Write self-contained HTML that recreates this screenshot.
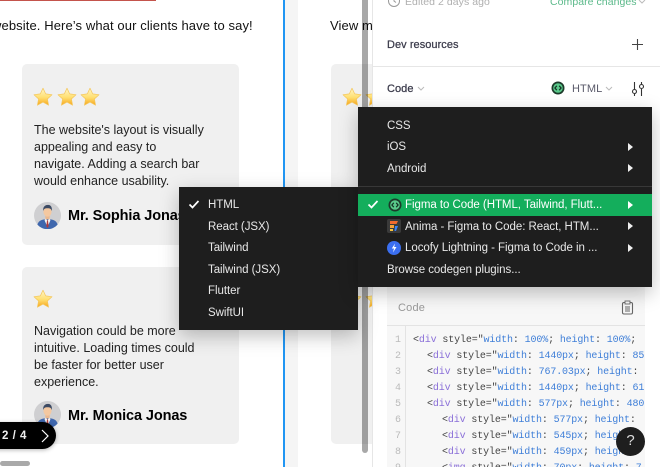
<!DOCTYPE html>
<html><head><meta charset="utf-8"><style>
html,body{margin:0;padding:0}
body{width:660px;height:467px;overflow:hidden;position:relative;background:#fff;font-family:"Liberation Sans",sans-serif}
.a{position:absolute}
.t{position:absolute;white-space:nowrap;line-height:16px}
.p{color:#222;font-size:12.5px;letter-spacing:0}
.n{color:#000;font-size:14.5px;font-weight:700;letter-spacing:-.1px}
.m{color:#e8e8e8;font-size:11.5px;letter-spacing:-.05px}
.arr{position:absolute;left:628px;width:0;height:0;border-left:5px solid #eee;border-top:4px solid transparent;border-bottom:4px solid transparent}
.c{position:absolute;white-space:nowrap;font:10px/16px "Liberation Mono",monospace;letter-spacing:-.13px;color:#444}
.c b{font-weight:400;color:#8a6fd8}.c i{font-style:normal;color:#3f7fd8}
.ln{position:absolute;left:395px;width:12px;font:10px/16px "Liberation Mono",monospace;color:#bbb}
.h{font-size:11px;color:#3a3a4a;-webkit-text-stroke:.25px #3a3a4a;letter-spacing:.05px}
</style></head><body>
<svg width="0" height="0" style="position:absolute"><defs>
<linearGradient id="g" x1="0" y1="0" x2="0" y2="1"><stop offset="0" stop-color="#fff6c8"/><stop offset=".55" stop-color="#ffdf70"/><stop offset="1" stop-color="#f8a51c"/></linearGradient>
<symbol id="s" viewBox="0 0 20 20"><path d="M10 1.2l2.7 5.7 6.3.8-4.6 4.3 1.2 6.2L10 15.1l-5.6 3.1 1.2-6.2L1 7.7l6.3-.8z" fill="url(#g)" stroke="#f4c65a" stroke-width=".7" stroke-linejoin="round"/></symbol>
<symbol id="av" viewBox="0 0 28 28"><circle cx="14" cy="14" r="14" fill="#cfcfd1"/><path d="M3.5 23.5c1-4 4.500-5.500 10.500-6 6 .5 9.500 2 10.500 6A14 14 0 0 1 3.500 23.500z" fill="#3f67ad"/><path d="M11.500 17l2.500 2 2.500-2 .5 2-3 7-3-7z" fill="#f3f3f3"/><path d="M13.500 19h1l.7 6-1.200 2-1.200-2z" fill="#b23a3a"/><rect x="11.800" y="13" width="4.400" height="5" fill="#eab88f"/><ellipse cx="14" cy="10" rx="4.200" ry="5.200" fill="#f4c8a0"/><path d="M9.500 9.500C9 4.500 12 3 14.500 3c3 0 4.500 2.500 4 6.500-.5-2-1.500-3-4.500-3s-4 1-4.500 3z" fill="#3c4a63"/></symbol>
<symbol id="fc" viewBox="0 0 14 14"><circle cx="7" cy="7" r="6.500" fill="#1c3a2a"/><circle cx="7" cy="7" r="4.800" fill="#59c98a"/><path d="M5.800 4.800L3.900 7l1.900 2.200M8.200 4.800L10.100 7 8.200 9.200" fill="none" stroke="#143024" stroke-width="1.200"/></symbol>
</defs></svg>

<!-- left canvas -->
<div class="a" style="left:0;top:0;width:156px;height:1px;background:#c4544c"></div>
<div class="t" style="left:-8px;top:18px;font-size:13px;letter-spacing:.1px;color:#111">website. Here’s what our clients have to say!</div>
<div class="a" style="left:283px;top:0;width:2px;height:467px;background:#2196f3"></div>
<div class="a" style="left:285px;top:0;width:13px;height:467px;background:#f5f5f5"></div>

<div class="a" style="left:22px;top:64px;width:217px;height:181px;background:#f0f0f0;border-radius:5px"></div>
<svg class="a" style="left:33px;top:87px" width="21" height="20"><use href="#s" width="20" height="20"/></svg>
<svg class="a" style="left:57px;top:87px" width="21" height="20"><use href="#s" width="20" height="20"/></svg>
<svg class="a" style="left:80px;top:87px" width="21" height="20"><use href="#s" width="20" height="20"/></svg>
<div class="t p" style="left:34px;top:122px">The website's layout is visually</div>
<div class="t p" style="left:34px;top:139px">appealing and easy to</div>
<div class="t p" style="left:34px;top:156px">navigate. Adding a search bar</div>
<div class="t p" style="left:34px;top:173px">would enhance usability.</div>
<svg class="a" style="left:34px;top:201px" width="27" height="30"><use href="#av" width="27" height="27" y="1"/></svg>
<div class="t n" style="left:68px;top:208px">Mr. Sophia Jonas</div>

<div class="a" style="left:22px;top:267px;width:217px;height:177px;background:#f0f0f0;border-radius:5px"></div>
<svg class="a" style="left:33px;top:289px" width="21" height="20"><use href="#s" width="20" height="20"/></svg>
<div class="t p" style="left:34px;top:323px">Navigation could be more</div>
<div class="t p" style="left:34px;top:340px">intuitive. Loading times could</div>
<div class="t p" style="left:34px;top:357px">be faster for better user</div>
<div class="t p" style="left:34px;top:374px">experience.</div>
<svg class="a" style="left:34px;top:401px" width="27" height="30"><use href="#av" width="27" height="27" y="0"/></svg>
<div class="t n" style="left:68px;top:408px">Mr. Monica Jonas</div>

<!-- second column -->
<div class="t" style="left:330px;top:18px;font-size:13px;letter-spacing:.1px;color:#111">View more</div>
<div class="a" style="left:331px;top:64px;width:42px;height:380px;background:#f0f0f0;border-radius:5px 0 0 5px"></div>
<svg class="a" style="left:342px;top:87px" width="21" height="20"><use href="#s" width="20" height="20"/></svg>
<svg class="a" style="left:365px;top:87px" width="21" height="20"><use href="#s" width="20" height="20"/></svg>
<svg class="a" style="left:342px;top:289px" width="21" height="20"><use href="#s" width="20" height="20"/></svg>
<svg class="a" style="left:365px;top:289px" width="21" height="20"><use href="#s" width="20" height="20"/></svg>
<div class="a" style="left:362px;top:0;width:6px;height:453px;background:rgba(0,0,0,.34);border-radius:0 0 3px 3px"></div>
<div class="a" style="left:0;top:461px;width:30px;height:5px;background:#a9a9a9;border-radius:3px"></div>

<!-- pager -->
<div class="a" style="left:-20px;top:422px;width:76px;height:27px;background:#000;border-radius:14px;box-shadow:0 1px 4px rgba(0,0,0,.3)"></div>
<div class="t" style="left:2px;top:428px;color:#eee;font-size:11.500px;font-weight:700;letter-spacing:.5px">2 / 4</div>
<svg class="a" style="left:39px;top:428px" width="12" height="16"><path d="M3 2l6 6-6 6" fill="none" stroke="#fff" stroke-width="1.200"/></svg>

<!-- right panel -->
<div class="a" style="left:372px;top:0;width:288px;height:467px;background:#fff;border-left:1px solid #e6e6e6;box-sizing:border-box"></div>
<svg class="a" style="left:387px;top:-6px" width="14" height="14"><circle cx="7" cy="7" r="5.500" fill="none" stroke="#999"/><path d="M7 4v3l2 1.500" fill="none" stroke="#999"/></svg>
<div class="t" style="left:405px;top:-6px;font-size:10.500px;color:#b0b0b0;letter-spacing:.05px">Edited 2 days ago</div>
<div class="t" style="left:550px;top:-6px;font-size:10.500px;color:#5bb98a;letter-spacing:.05px">Compare changes</div>
<svg class="a" style="left:638px;top:-1px" width="8" height="6"><path d="M1 1l3 3 3-3" fill="none" stroke="#bbb"/></svg>
<div class="t h" style="left:387px;top:37px">Dev resources</div>
<svg class="a" style="left:631px;top:38px" width="13" height="13"><path d="M6.500 1v11M1 6.500h11" stroke="#444" stroke-width="1.100"/></svg>
<div class="a" style="left:373px;top:66px;width:287px;height:1px;background:#e6e6e6"></div>
<div class="t h" style="left:387px;top:81px">Code</div>
<svg class="a" style="left:417px;top:86px" width="8" height="6"><path d="M1 1l3 3 3-3" fill="none" stroke="#bbb"/></svg>
<svg class="a" style="left:551px;top:81px" width="14" height="14"><use href="#fc" width="14" height="14"/></svg>
<div class="t" style="left:572px;top:81px;font-size:11px;color:#5a5a6a;letter-spacing:.1px">HTML</div>
<svg class="a" style="left:605px;top:86px" width="8" height="6"><path d="M1 1l3 3 3-3" fill="none" stroke="#bbb"/></svg>
<svg class="a" style="left:631px;top:81px" width="14" height="16"><path d="M3.500 1v7M3.500 13v2M10.500 1v2M10.500 8v7" stroke="#333" stroke-width="1.100" fill="none"/><circle cx="3.500" cy="10.500" r="2" fill="none" stroke="#333" stroke-width="1.100"/><circle cx="10.500" cy="5.500" r="2" fill="none" stroke="#333" stroke-width="1.100"/></svg>

<!-- code panel -->
<div class="a" style="left:387px;top:287px;width:258px;height:180px;background:#f7f7f7"></div>
<div class="a" style="left:387px;top:325px;width:258px;height:1px;background:#e3e3e3"></div>
<div class="a" style="left:405px;top:325px;width:1px;height:142px;background:#e3e3e3"></div>
<div class="t" style="left:398px;top:300px;font-size:11px;color:#999;letter-spacing:.2px">Code</div>
<svg class="a" style="left:620px;top:300px" width="15" height="15"><rect x="2.500" y="2.500" width="10" height="11.500" rx="1.500" fill="none" stroke="#666" stroke-width="1.100"/><rect x="5" y="1" width="5" height="3" fill="#f7f7f7" stroke="#666" stroke-width=".9"/><path d="M5 7h5M5 9h5M5 11h5" stroke="#666" stroke-width=".9"/></svg>
<div style="position:absolute;left:0;top:0;width:645px;height:467px;overflow:hidden">
<div class="ln" style="top:333px">1</div><div class="ln" style="top:349px">2</div><div class="ln" style="top:365px">3</div><div class="ln" style="top:381px">4</div><div class="ln" style="top:397px">5</div><div class="ln" style="top:413px">6</div><div class="ln" style="top:429px">7</div><div class="ln" style="top:445px">8</div><div class="ln" style="top:461px">9</div>
<div class="c" style="left:413px;top:333px">&lt;<b>div</b> style="<i>width</i>: <i>100%</i>; <i>height</i>: <i>100%</i>;</div>
<div class="c" style="left:427px;top:349px">&lt;<b>div</b> style="<i>width</i>: <i>1440px</i>; <i>height</i>: <i>85</i></div>
<div class="c" style="left:427px;top:365px">&lt;<b>div</b> style="<i>width</i>: <i>767.03px</i>; <i>height</i>:</div>
<div class="c" style="left:427px;top:381px">&lt;<b>div</b> style="<i>width</i>: <i>1440px</i>; <i>height</i>: <i>61</i></div>
<div class="c" style="left:427px;top:397px">&lt;<b>div</b> style="<i>width</i>: <i>577px</i>; <i>height</i>: <i>480</i></div>
<div class="c" style="left:442px;top:413px">&lt;<b>div</b> style="<i>width</i>: <i>577px</i>; <i>height</i>:</div>
<div class="c" style="left:442px;top:429px">&lt;<b>div</b> style="<i>width</i>: <i>545px</i>; <i>height</i>:</div>
<div class="c" style="left:442px;top:445px">&lt;<b>div</b> style="<i>width</i>: <i>459px</i>; <i>height</i>:</div>
<div class="c" style="left:442px;top:461px">&lt;<b>img</b> style="<i>width</i>: <i>70px</i>; <i>height</i>: <i>7</i></div>
</div>
<div class="a" style="left:616px;top:427px;width:29px;height:29px;border-radius:50%;background:#1e1e1e"></div>
<div class="t" style="left:616px;width:29px;text-align:center;top:433px;color:#ddd;font-size:15px">?</div>

<!-- submenu left -->
<div class="a" style="left:179px;top:187px;width:179px;height:143px;background:#1e1e1e;box-shadow:0 6px 18px rgba(0,0,0,.25)"></div>
<svg class="a" style="left:188px;top:199px" width="12" height="11"><path d="M1.500 5.500l3 3 6-6.500" fill="none" stroke="#fff" stroke-width="1.700"/></svg>
<div class="t m" style="left:208px;top:197px">HTML</div>
<div class="t m" style="left:208px;top:219px">React (JSX)</div>
<div class="t m" style="left:208px;top:240px">Tailwind</div>
<div class="t m" style="left:208px;top:262px">Tailwind (JSX)</div>
<div class="t m" style="left:208px;top:283px">Flutter</div>
<div class="t m" style="left:208px;top:305px">SwiftUI</div>

<!-- main menu -->
<div class="a" style="left:358px;top:107px;width:294px;height:180px;background:#1e1e1e;box-shadow:0 6px 18px rgba(0,0,0,.25)"></div>
<div class="t m" style="left:387px;top:118px">CSS</div>
<div class="t m" style="left:387px;top:139px">iOS</div><div class="arr" style="top:143px"></div>
<div class="t m" style="left:387px;top:161px">Android</div><div class="arr" style="top:164px"></div>
<div class="a" style="left:358px;top:186px;width:294px;height:1px;background:#383838"></div>
<div class="a" style="left:358px;top:194px;width:294px;height:22px;background:#14ae5c"></div>
<svg class="a" style="left:367px;top:199px" width="12" height="11"><path d="M1.500 5.500l3 3 6-6.500" fill="none" stroke="#fff" stroke-width="1.700"/></svg>
<svg class="a" style="left:388px;top:198px" width="14" height="14"><use href="#fc" width="14" height="14"/></svg>
<div class="t m" style="left:405px;top:197px;color:#fff">Figma to Code (HTML, Tailwind, Flutt...</div><div class="arr" style="top:201px;border-left-color:#fff"></div>
<div class="a" style="left:387px;top:219px;width:14px;height:14px;background:#3a3a3a;border-radius:2px"></div>
<svg class="a" style="left:388px;top:220px" width="12" height="12"><path d="M2 1h8L8.500 4H2z" fill="#f26a2e"/><path d="M2 5h4v3H2z" fill="#f7a23b"/><path d="M2 9h3v2H2z" fill="#f7c33b"/><path d="M7 6h3L8 11H6.500z" fill="#3b82f6"/></svg>
<div class="t m" style="left:405px;top:219px">Anima - Figma to Code: React, HTM...</div><div class="arr" style="top:222px"></div>
<svg class="a" style="left:387px;top:241px" width="14" height="14"><circle cx="7" cy="7" r="7" fill="#3b6ff0"/><path d="M8 2.500L4.800 7.500H7L6 11.500 9.500 6H7.200z" fill="#fff"/></svg>
<div class="t m" style="left:405px;top:240px">Locofy Lightning - Figma to Code in ...</div><div class="arr" style="top:244px"></div>
<div class="t m" style="left:387px;top:262px">Browse codegen plugins...</div>
</body></html>
